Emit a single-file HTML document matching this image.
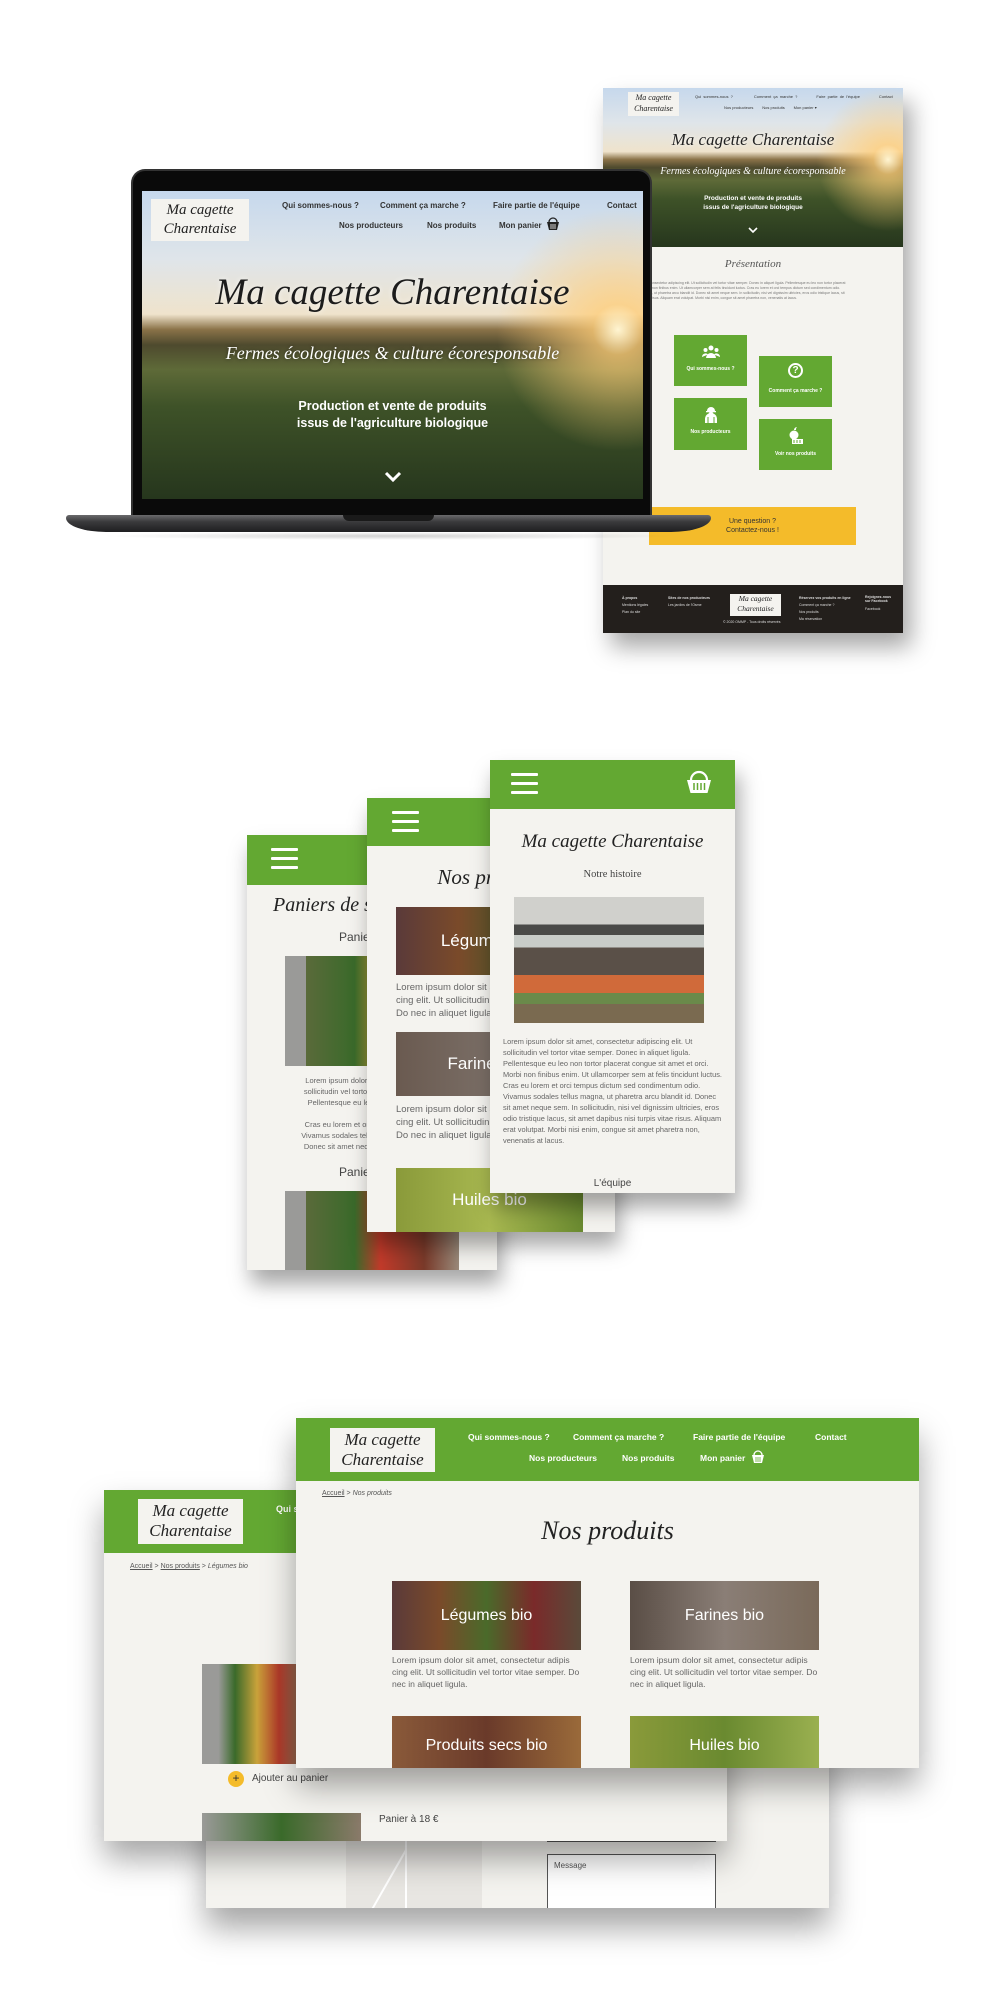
<!DOCTYPE html>
<html><head><meta charset="utf-8"><style>
*{margin:0;padding:0;box-sizing:border-box}
body{width:1000px;height:2016px;background:#fff;position:relative;overflow:hidden;font-family:"Liberation Sans",sans-serif}
.a{position:absolute}
.hand{font-family:"Liberation Serif",serif;font-style:italic}
.pg{background:#f4f3ef}
.green{background:#63a832}
.hero{background:
 radial-gradient(circle at 95% 45%,rgba(255,245,210,1) 0,rgba(255,205,120,.75) 5%,rgba(255,180,90,0) 24%),
 linear-gradient(180deg,#c6d8ec 0%,#dfe5ea 22%,#efe3cc 40%,#8a7248 45%,#4e4a2e 50%,#5e6a38 58%,#3e5228 70%,#26361d 100%)}
.c{text-align:center}
.nav{font-size:8px;font-weight:bold;color:#333}
.lorem{color:#666;font-size:7.5px;line-height:11px}
.ham i{display:block;height:3px;background:#fff;margin-bottom:6px;border-radius:1px}
.box svg{display:block;margin:0 auto}
</style></head><body>

<!-- Tall right page -->
<div class="a pg" style="left:603px;top:88px;width:300px;height:545px;box-shadow:8px 14px 22px rgba(0,0,0,.35)">
 <div class="a hero" style="left:0;top:0;width:300px;height:159px"></div>
 <div class="a hand c" style="left:25px;top:4px;width:51px;height:24px;background:#f4f3ef;font-size:8px;line-height:11px;color:#222">Ma cagette Charentaise</div>
 <div class="a" style="left:92px;top:6px;font-size:4px;color:#333;word-spacing:1px">Qui sommes-nous ? &nbsp;&nbsp;&nbsp;&nbsp;&nbsp;&nbsp;&nbsp;&nbsp; Comment ça marche ? &nbsp;&nbsp;&nbsp;&nbsp;&nbsp;&nbsp;&nbsp; Faire partie de l'équipe &nbsp;&nbsp;&nbsp;&nbsp;&nbsp;&nbsp;&nbsp; Contact</div>
 <div class="a" style="left:121px;top:17px;font-size:4px;color:#333">Nos producteurs &nbsp;&nbsp;&nbsp;&nbsp;&nbsp;&nbsp; Nos produits &nbsp;&nbsp;&nbsp;&nbsp;&nbsp;&nbsp; Mon panier ▾</div>
 <div class="a hand c" style="left:0;top:42px;width:300px;font-size:17px;color:#222;text-shadow:0 0 4px #fff">Ma cagette Charentaise</div>
 <div class="a hand c" style="left:0;top:78px;width:300px;font-size:10px;color:#fff">Fermes écologiques &amp; culture écoresponsable</div>
 <div class="a c" style="left:0;top:106px;width:300px;font-size:6.5px;line-height:9px;font-weight:bold;color:#fff">Production et vente de produits<br>issus de l'agriculture biologique</div>
 <svg class="a" style="left:145px;top:139px" width="10" height="7" viewBox="0 0 10 7"><path d="M1 1l4 4 4-4" fill="none" stroke="#fff" stroke-width="1.6"/></svg>
 <div class="a hand c" style="left:0;top:170px;width:300px;font-size:11px;color:#555">Présentation</div>
 <div class="a" style="left:2px;top:193px;width:246px;font-size:3.5px;line-height:5px;color:#777">Lorem ipsum dolor sit amet, consectetur adipiscing elit. Ut sollicitudin vel tortor vitae semper. Donec in aliquet ligula. Pellentesque eu leo non tortor placerat congue sit amet et orci. Morbi non finibus enim. Ut ullamcorper sem at felis tincidunt luctus. Cras eu lorem et orci tempus dictum sed condimentum odio. Vivamus sodales tellus magna, ut pharetra arcu blandit id. Donec sit amet neque sem. In sollicitudin, nisi vel dignissim ultricies, eros odio tristique lacus, sit amet dapibus nisi turpis vitae risus. Aliquam erat volutpat. Morbi nisi enim, congue sit amet pharetra non, venenatis at lacus.</div>
 <div class="a green c box" style="left:71px;top:247px;width:73px;height:51px;color:#fff;font-size:5px;font-weight:bold;padding-top:10px"><svg width="18" height="13" viewBox="0 0 18 13"><circle cx="9" cy="3" r="2.5" fill="#fff"/><circle cx="3.5" cy="5" r="2" fill="#fff"/><circle cx="14.5" cy="5" r="2" fill="#fff"/><path d="M4 13a5 5 0 0 1 10 0z" fill="#fff"/><path d="M0 12a3.5 3.5 0 0 1 6-2.5M18 12a3.5 3.5 0 0 0-6-2.5" fill="#fff"/></svg><div style="margin-top:8px">Qui sommes-nous ?</div></div>
 <div class="a green c box" style="left:156px;top:268px;width:73px;height:51px;color:#fff;font-size:5px;font-weight:bold;padding-top:7px"><div style="width:15px;height:15px;border:2px solid #fff;border-radius:50%;margin:0 auto;font-size:10px;line-height:11px">?</div><div style="margin-top:10px">Comment ça marche ?</div></div>
 <div class="a green c box" style="left:71px;top:310px;width:73px;height:52px;color:#fff;font-size:5px;font-weight:bold;padding-top:8px"><svg width="14" height="17" viewBox="0 0 14 17"><path d="M3 5a4 4 0 0 1 8 0z" fill="#fff"/><rect x="2" y="5" width="10" height="1.3" fill="#fff"/><circle cx="7" cy="8" r="2.3" fill="#fff"/><path d="M1 17v-4a6 6 0 0 1 12 0v4z" fill="#fff"/><path d="M4 11v6M10 11v6" stroke="#63a832" stroke-width="1"/></svg><div style="margin-top:6px">Nos producteurs</div></div>
 <div class="a green c box" style="left:156px;top:331px;width:73px;height:51px;color:#fff;font-size:5px;font-weight:bold;padding-top:8px"><svg width="16" height="17" viewBox="0 0 16 17"><path d="M6 3c0-2 2-3 3-3-1 1-1 2-1 3" fill="#fff"/><circle cx="6" cy="8" r="4.5" fill="#fff"/><rect x="4" y="12" width="11" height="5" fill="#fff"/><path d="M6 13v3M9 13v3M12 13v3" stroke="#63a832" stroke-width="1"/></svg><div style="margin-top:7px">Voir nos produits</div></div>
 <div class="a c" style="left:46px;top:419px;width:207px;height:38px;background:#f4bb2a;font-size:7px;line-height:9px;color:#333;padding-top:10px">Une question ?<br>Contactez-nous !</div>
 <div class="a" style="left:0;top:497px;width:300px;height:48px;background:#231f1c;color:#ddd;font-size:3.5px">
  <div class="a" style="left:19px;top:10px;line-height:7px"><b>À propos</b><br>Mentions légales<br>Plan du site</div>
  <div class="a" style="left:65px;top:10px;line-height:7px"><b>Sites de nos producteurs</b><br>Les jardins de l'Osme</div>
  <div class="a hand c" style="left:127px;top:9px;width:51px;height:22px;background:#f4f3ef;color:#222;font-size:7.5px;line-height:10px">Ma cagette Charentaise</div>
  <div class="a" style="left:120px;top:35px">© 2020 OMMP - Tous droits réservés</div>
  <div class="a" style="left:196px;top:10px;line-height:7px"><b>Réservez vos produits en ligne</b><br>Comment ça marche ?<br>Nos produits<br>Ma réservation</div>
  <div class="a" style="left:262px;top:10px;line-height:4px"><b>Rejoignez-nous<br>sur Facebook</b><br><br>Facebook</div>
 </div>
</div>

<!-- Laptop -->
<div class="a" style="left:131px;top:169px;width:521px;height:347px;background:#0a0a0a;border-radius:14px 14px 0 0;border:2px solid #333;border-bottom:none"></div>
<div class="a hero" style="left:142px;top:191px;width:501px;height:308px;overflow:hidden">
 <div class="a hand c" style="left:9px;top:8px;width:98px;height:42px;background:#f4f3ef;font-size:15px;line-height:19px;color:#222;padding-top:2px">Ma cagette Charentaise</div>
 <div class="a nav" style="left:140px;top:10px">Qui sommes-nous ?</div>
 <div class="a nav" style="left:238px;top:10px">Comment ça marche ?</div>
 <div class="a nav" style="left:351px;top:10px">Faire partie de l'équipe</div>
 <div class="a nav" style="left:465px;top:10px">Contact</div>
 <div class="a nav" style="left:197px;top:30px">Nos producteurs</div>
 <div class="a nav" style="left:285px;top:30px">Nos produits</div>
 <div class="a nav" style="left:357px;top:30px">Mon panier</div>
 <svg class="a" style="left:404px;top:25px" width="14" height="15" viewBox="0 0 14 15"><path d="M3 6 A4 4 0 0 1 11 6" fill="none" stroke="#222" stroke-width="1.3"/><path d="M1 6h12l-2 8H3z" fill="#222"/><path d="M5 8v5M7 8v5M9 8v5" stroke="#fff" stroke-width=".8"/></svg>
 <div class="a hand c" style="left:0;top:80px;width:501px;font-size:37px;color:#1c1c1c;text-shadow:0 0 6px rgba(255,255,255,.7)">Ma cagette Charentaise</div>
 <div class="a hand c" style="left:0;top:152px;width:501px;font-size:18px;color:#fff;text-shadow:0 0 3px rgba(0,0,0,.5)">Fermes écologiques &amp; culture écoresponsable</div>
 <div class="a c" style="left:0;top:207px;width:501px;font-size:12.5px;line-height:17px;font-weight:bold;color:#fff">Production et vente de produits<br>issus de l'agriculture biologique</div>
 <svg class="a" style="left:241px;top:280px" width="20" height="12" viewBox="0 0 20 12"><path d="M3 2l7 7 7-7" fill="none" stroke="#fff" stroke-width="3"/></svg>
</div>
<div class="a" style="left:66px;top:515px;width:645px;height:17px;background:linear-gradient(180deg,#6a6a6c 0%,#3a3a3c 40%,#1e1e20 100%);border-radius:3px 3px 40px 40px/3px 3px 14px 14px"></div>
<div class="a" style="left:343px;top:515px;width:91px;height:6px;background:#1a1a1a;border-radius:0 0 6px 6px"></div>
<div class="a" style="left:100px;top:532px;width:580px;height:8px;background:radial-gradient(ellipse at center,rgba(0,0,0,.18),rgba(0,0,0,0) 70%)"></div>

<!-- Phones -->
<div class="a pg" style="left:247px;top:835px;width:250px;height:435px;overflow:hidden;box-shadow:4px 14px 20px rgba(0,0,0,.35)">
 <div class="a green" style="left:0;top:0;width:250px;height:50px"></div>
 <div class="a ham" style="left:24px;top:13px;width:27px"><i></i><i></i><i></i></div>
 <div class="a hand" style="left:26px;top:59px;font-size:20px;color:#222;white-space:nowrap">Paniers de saison</div>
 <div class="a" style="left:92px;top:95px;font-size:12px;color:#444">Panier 1</div>
 <div class="a" style="left:38px;top:121px;width:174px;height:110px;background:linear-gradient(90deg,#9a9a98 0 12%,#5a6a3a 12%,#3a6a2a 40%,#c9a23a 55%,#7a3a2a 80%,#9a8a7a)"></div>
 <div class="a c lorem" style="left:5px;top:240px;width:240px">Lorem ipsum dolor sit amet, consectetur<br>sollicitudin vel tortor vitae semper. Donec<br>Pellentesque eu leo non tortor placerat<br><br>Cras eu lorem et orci tempus dictum sed<br>Vivamus sodales tellus magna, ut pharetra<br>Donec sit amet neque sem. In sollicitudin</div>
 <div class="a" style="left:92px;top:330px;font-size:12px;color:#444">Panier 2</div>
 <div class="a" style="left:38px;top:356px;width:174px;height:80px;background:linear-gradient(90deg,#9a9a98 0 12%,#5a6a3a 12%,#3a6a2a 40%,#c23a2a 55%,#7a3a2a 80%,#9a8a7a)"></div>
</div>
<div class="a pg" style="left:367px;top:798px;width:248px;height:434px;overflow:hidden;box-shadow:4px 14px 20px rgba(0,0,0,.35)">
 <div class="a green" style="left:0;top:0;width:248px;height:48px"></div>
 <div class="a ham" style="left:25px;top:13px;width:27px"><i></i><i></i><i></i></div>
 <div class="a hand c" style="left:0;top:67px;width:248px;font-size:21px;color:#222">Nos produits</div>
 <div class="a c" style="left:29px;top:109px;width:187px;height:68px;background:linear-gradient(90deg,#5a3a3a,#7a4a2a,#4a5a2a,#6a2a2a);color:#fff;font-size:17px;line-height:68px">Légumes bio</div>
 <div class="a lorem" style="left:29px;top:183px;width:200px;font-size:9.5px;line-height:13px">Lorem ipsum dolor sit amet, consectetur adipis cing elit. Ut sollicitudin vel tortor vitae semper. Do nec in aliquet ligula.</div>
 <div class="a c" style="left:29px;top:234px;width:187px;height:64px;background:linear-gradient(90deg,#6a5a50,#7a6e66,#5a4a40);color:#fff;font-size:17px;line-height:64px">Farines bio</div>
 <div class="a lorem" style="left:29px;top:305px;width:200px;font-size:9.5px;line-height:13px">Lorem ipsum dolor sit amet, consectetur adipis cing elit. Ut sollicitudin vel tortor vitae semper. Do nec in aliquet ligula.</div>
 <div class="a c" style="left:29px;top:370px;width:187px;height:64px;background:linear-gradient(90deg,#8a9a3a,#a8b850,#6a8a30);color:#fff;font-size:17px;line-height:64px">Huiles bio</div>
</div>
<div class="a pg" style="left:490px;top:760px;width:245px;height:433px;overflow:hidden;box-shadow:4px 14px 20px rgba(0,0,0,.35)">
 <div class="a green" style="left:0;top:0;width:245px;height:49px"></div>
 <div class="a ham" style="left:21px;top:13px;width:27px"><i></i><i></i><i></i></div>
 <svg class="a" style="left:195px;top:8px" width="28" height="28" viewBox="0 0 28 28"><path d="M6 12 A8 8 0 0 1 22 12" fill="none" stroke="#fff" stroke-width="2.2"/><path d="M2 12h24l-3.5 13h-17z" fill="#fff"/><path d="M9 15v7M12.5 15v7M16 15v7M19.5 15v7" stroke="#63a832" stroke-width="1.5"/></svg>
 <div class="a hand c" style="left:0;top:71px;width:245px;font-size:19px;color:#222">Ma cagette Charentaise</div>
 <div class="a c" style="left:0;top:109px;width:245px;font-size:10.5px;color:#444;font-family:'Liberation Serif',serif">Notre histoire</div>
 <div class="a" style="left:24px;top:137px;width:190px;height:126px;background:linear-gradient(180deg,#d0d0cc 0 22%,#4a4a48 22% 30%,#c8ccc8 30% 40%,#5a5048 40% 62%,#d06a3a 62% 76%,#6a8a4a 76% 85%,#7a6a50 85%)"></div>
 <div class="a lorem" style="left:13px;top:276px;width:222px;font-size:7.4px;line-height:11px">Lorem ipsum dolor sit amet, consectetur adipiscing elit. Ut sollicitudin vel tortor vitae semper. Donec in aliquet ligula. Pellentesque eu leo non tortor placerat congue sit amet et orci. Morbi non finibus enim. Ut ullamcorper sem at felis tincidunt luctus. Cras eu lorem et orci tempus dictum sed condimentum odio. Vivamus sodales tellus magna, ut pharetra arcu blandit id. Donec sit amet neque sem. In sollicitudin, nisi vel dignissim ultricies, eros odio tristique lacus, sit amet dapibus nisi turpis vitae risus. Aliquam erat volutpat. Morbi nisi enim, congue sit amet pharetra non, venenatis at lacus.</div>
 <div class="a c" style="left:0;top:418px;width:245px;font-size:10px;color:#444">L'équipe</div>
</div>

<!-- Bottom desktops -->
<div class="a pg" style="left:206px;top:1700px;width:623px;height:208px;overflow:hidden;box-shadow:0 20px 30px rgba(0,0,0,.35)">
 <div class="a" style="left:140px;top:80px;width:136px;height:140px;background:#e8e6e2"></div>
 <svg class="a" style="left:140px;top:80px" width="136" height="140"><path d="M60 0v140M60 60l76-40M60 70l-40 70M0 40h60" stroke="#fff" stroke-width="2" fill="none"/><circle cx="70" cy="50" r="3" fill="#d33"/><rect x="40" y="18" width="50" height="12" fill="#fff" stroke="#bbb" stroke-width=".5"/></svg>
 <div class="a" style="left:341px;top:80px;width:169px;height:62px;border:1px solid #555"></div>
 <div class="a" style="left:341px;top:154px;width:169px;height:60px;border:1px solid #555;background:#fff;font-size:8px;color:#555;padding:6px">Message</div>
</div>
<div class="a pg" style="left:104px;top:1490px;width:623px;height:351px;overflow:hidden;box-shadow:0 18px 30px rgba(0,0,0,.35)">
 <div class="a green" style="left:0;top:0;width:623px;height:63px"></div>
 <div class="a hand c" style="left:34px;top:9px;width:105px;height:45px;background:#f4f3ef;font-size:17px;line-height:20px;color:#222;padding-top:2px">Ma cagette Charentaise</div>
 <div class="a" style="left:172px;top:14px;font-size:9px;font-weight:bold;color:#fff">Qui sommes-nous ?</div>
 <div class="a" style="left:26px;top:73px;font-size:7px;color:#555"><u>Accueil</u> &gt; <u>Nos produits</u> &gt; <i>Légumes bio</i></div>
 <div class="a" style="left:98px;top:174px;width:110px;height:100px;background:linear-gradient(90deg,#9a9a98 0 15%,#3a6a2a 30%,#c9a23a 50%,#b23a2a 70%,#7a8a6a)"></div>
 <div class="a" style="left:124px;top:281px;width:16px;height:16px;border-radius:50%;background:#f4bb2a;color:#333;font-size:12px;line-height:15px;text-align:center">+</div>
 <div class="a" style="left:148px;top:283px;font-size:10px;color:#444">Ajouter au panier</div>
 <div class="a" style="left:98px;top:323px;width:159px;height:40px;background:linear-gradient(90deg,#9a9a98,#3a6a2a,#8a7a6a)"></div>
 <div class="a" style="left:275px;top:324px;font-size:10px;color:#444">Panier à 18 €</div>
</div>
<div class="a pg" style="left:296px;top:1418px;width:623px;height:350px;overflow:hidden;box-shadow:0 18px 30px rgba(0,0,0,.35)">
 <div class="a green" style="left:0;top:0;width:623px;height:63px"></div>
 <div class="a hand c" style="left:34px;top:10px;width:105px;height:44px;background:#f4f3ef;font-size:17px;line-height:20px;color:#222;padding-top:2px">Ma cagette Charentaise</div>
 <div class="a" style="left:172px;top:14px;font-size:8.5px;font-weight:bold;color:#fff">Qui sommes-nous ?</div>
 <div class="a" style="left:277px;top:14px;font-size:8.5px;font-weight:bold;color:#fff">Comment ça marche ?</div>
 <div class="a" style="left:397px;top:14px;font-size:8.5px;font-weight:bold;color:#fff">Faire partie de l'équipe</div>
 <div class="a" style="left:519px;top:14px;font-size:8.5px;font-weight:bold;color:#fff">Contact</div>
 <div class="a" style="left:233px;top:35px;font-size:8.5px;font-weight:bold;color:#fff">Nos producteurs</div>
 <div class="a" style="left:326px;top:35px;font-size:8.5px;font-weight:bold;color:#fff">Nos produits</div>
 <div class="a" style="left:404px;top:35px;font-size:8.5px;font-weight:bold;color:#fff">Mon panier</div>
 <svg class="a" style="left:455px;top:30px" width="14" height="16" viewBox="0 0 14 16"><path d="M3 7 A4 4 0 0 1 11 7" fill="none" stroke="#fff" stroke-width="1.3"/><path d="M1 7h12l-2 8H3z" fill="#fff"/><path d="M5 9v5M7 9v5M9 9v5" stroke="#63a832" stroke-width=".8"/></svg>
 <div class="a" style="left:26px;top:72px;font-size:7px;color:#555"><u>Accueil</u> &gt; <i>Nos produits</i></div>
 <div class="a hand c" style="left:0;top:98px;width:623px;font-size:26px;color:#222">Nos produits</div>
 <div class="a c" style="left:96px;top:163px;width:189px;height:69px;background:linear-gradient(90deg,#5a3a3a,#7a4a2a,#4a6a2a,#7a2a2a,#5a4a3a);color:#fff;font-size:16px;line-height:69px">Légumes bio</div>
 <div class="a lorem" style="left:96px;top:236px;width:195px;font-size:8.6px;line-height:12px">Lorem ipsum dolor sit amet, consectetur adipis cing elit. Ut sollicitudin vel tortor vitae semper. Do nec in aliquet ligula.</div>
 <div class="a c" style="left:334px;top:163px;width:189px;height:69px;background:linear-gradient(90deg,#5a4e46,#8a7e76,#7a6a5a);color:#fff;font-size:16px;line-height:69px">Farines bio</div>
 <div class="a lorem" style="left:334px;top:236px;width:195px;font-size:8.6px;line-height:12px">Lorem ipsum dolor sit amet, consectetur adipis cing elit. Ut sollicitudin vel tortor vitae semper. Do nec in aliquet ligula.</div>
 <div class="a c" style="left:96px;top:298px;width:189px;height:60px;background:linear-gradient(90deg,#8a5a3a,#6a3a2a,#9a6a3a);color:#fff;font-size:16px;line-height:60px">Produits secs bio</div>
 <div class="a c" style="left:334px;top:298px;width:189px;height:60px;background:linear-gradient(90deg,#8a9a3a,#6a8a30,#9ab050);color:#fff;font-size:16px;line-height:60px">Huiles bio</div>
</div>
</body></html>
